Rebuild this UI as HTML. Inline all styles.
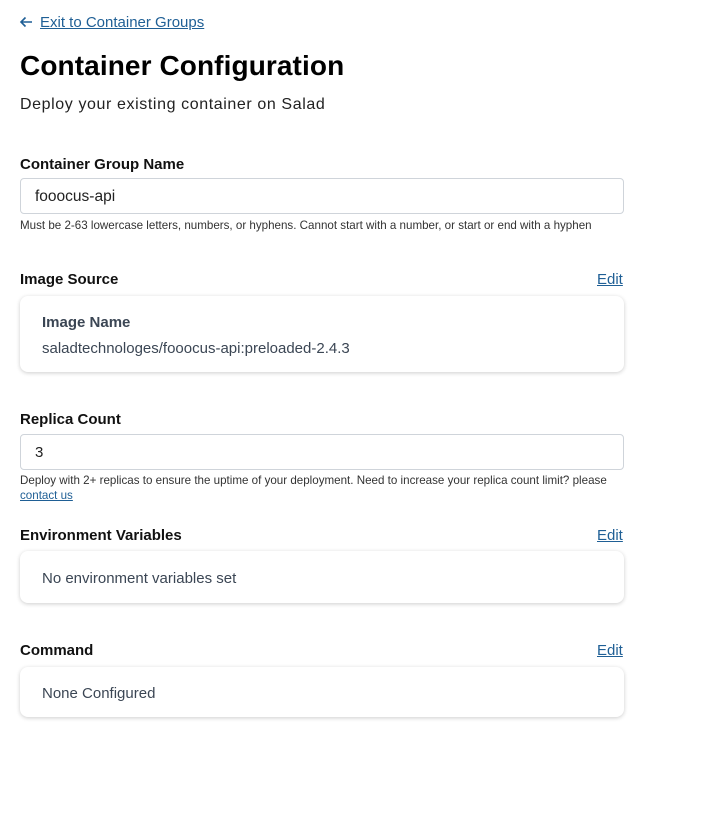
<!DOCTYPE html>
<html><head><style>
body{margin:0;width:720px;height:818px;background:#fff;font-family:"Liberation Sans",sans-serif;color:#000;position:relative;overflow:hidden}
.a{position:absolute;white-space:nowrap}
.lab{font-size:15px;font-weight:bold;color:#111}
.edit{font-size:15px;color:#1f5f95;text-decoration:underline;left:597px}
.inp{position:absolute;left:20px;border:1px solid #cfd4da;border-radius:4px;box-sizing:border-box;width:604px}
.card{position:absolute;left:20px;width:604px;border-radius:8px;box-shadow:0 1px 4px rgba(0,0,0,.2);background:#fff}
.hint{font-size:11.6px;color:#333}
.ct{font-size:15px;color:#3b4654}
</style></head><body>
<svg class="a" style="left:19px;top:16px" width="14" height="12" viewBox="0 0 14 12"><path d="M13 6H2M6.5 1.5L2 6l4.5 4.5" stroke="#1f5f95" stroke-width="1.6" fill="none"/></svg>
<div class="a" style="left:40px;top:14px;font-size:15px;color:#1f5f95;text-decoration:underline">Exit to Container Groups</div>
<div class="a" style="left:20px;top:50px;font-size:28px;font-weight:bold;letter-spacing:.1px">Container Configuration</div>
<div class="a" style="left:20px;top:96px;font-size:16px;letter-spacing:.6px;color:#222">Deploy your existing container on Salad</div>

<div class="a lab" style="left:20px;top:156px">Container Group Name</div>
<div class="inp" style="top:178px;height:36px"></div>
<div class="a" style="left:35px;top:188px;font-size:15.5px;color:#222">fooocus-api</div>
<div class="a hint" style="left:20px;top:219px">Must be 2-63 lowercase letters, numbers, or hyphens. Cannot start with a number, or start or end with a hyphen</div>

<div class="a lab" style="left:20px;top:271px">Image Source</div>
<div class="a edit" style="top:271px">Edit</div>
<div class="card" style="top:296px;height:76px"></div>
<div class="a ct" style="left:42px;top:314px;font-weight:bold">Image Name</div>
<div class="a ct" style="left:42px;top:340px">saladtechnologes/fooocus-api:preloaded-2.4.3</div>

<div class="a lab" style="left:20px;top:411px">Replica Count</div>
<div class="inp" style="top:434px;height:36px"></div>
<div class="a" style="left:35px;top:444px;font-size:15px;color:#222">3</div>
<div class="a hint" style="left:20px;top:474px">Deploy with 2+ replicas to ensure the uptime of your deployment. Need to increase your replica count limit? please</div>
<div class="a hint" style="left:20px;top:489px;color:#1f5f95;text-decoration:underline">contact us</div>

<div class="a lab" style="left:20px;top:527px">Environment Variables</div>
<div class="a edit" style="top:527px">Edit</div>
<div class="card" style="top:551px;height:52px"></div>
<div class="a ct" style="left:42px;top:570px">No environment variables set</div>

<div class="a lab" style="left:20px;top:642px">Command</div>
<div class="a edit" style="top:642px">Edit</div>
<div class="card" style="top:667px;height:50px"></div>
<div class="a ct" style="left:42px;top:685px">None Configured</div>
</body></html>
